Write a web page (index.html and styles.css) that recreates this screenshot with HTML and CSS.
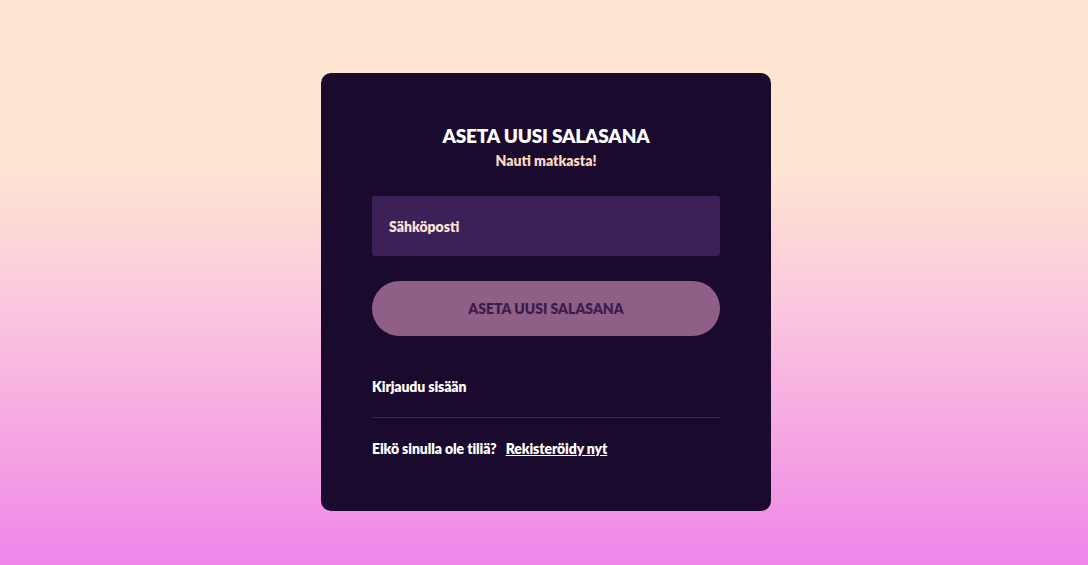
FILE: index.html
```html
<!DOCTYPE html>
<html lang="fi">
<head>
<meta charset="utf-8">
<link rel="stylesheet" href="styles.css">
</head>
<body>
<main class="page">
  <section class="card">
    <header class="head">
      <h1 class="title">ASETA UUSI SALASANA</h1>
      <p class="subtitle">Nauti matkasta!</p>
    </header>
    <div class="field">Sähköposti</div>
    <button class="btn">ASETA UUSI SALASANA</button>
    <a class="login">Kirjaudu sisään</a>
    <hr class="divider">
    <p class="register">Eikö sinulla ole tiliä? <a class="reglink">Rekisteröidy nyt</a></p>
  </section>
</main>
</body>
</html>
```
FILE: styles.css
```css
html, body { margin: 0; height: 100%; }
body {
  font-family: Lato, "Liberation Sans", sans-serif;
  background: linear-gradient(180deg, #fee6d2 0%, #fee4d2 30%, #fbc6df 55%, #f5a5e2 78%, #f086ea 100%);
}
.page {
  height: 565px;
  display: flex;
  justify-content: center;
  align-items: flex-start;
  padding: 73px 0 0 4px;
  box-sizing: border-box;
}
.card {
  width: 450px;
  height: 438px;
  box-sizing: border-box;
  background: #1a0a2e;
  border-radius: 10px;
  padding: 50px 51px 0;
  display: flex;
  flex-direction: column;
}
.head { text-align: center; margin-bottom: 24px; }
.title {
  margin: 0;
  font-size: 19px;
  font-weight: 800;
  color: #ffffff;
  line-height: 26px;
  letter-spacing: -0.2px;
}
.subtitle {
  margin: 1px 0 0;
  font-size: 14px;
  font-weight: 800;
  color: #fcd8c4;
  line-height: 22px;
}
.field {
  height: 60px;
  background: #3c2058;
  border-radius: 3px;
  display: flex;
  align-items: center;
  padding-left: 17px;
  font-size: 14px;
  font-weight: 800;
  color: #fde2d2;
}
.btn {
  margin-top: 25px;
  height: 55px;
  border: none;
  border-radius: 28px;
  background: #8f5f87;
  color: #3e1a4f;
  font-family: inherit;
  font-size: 14px;
  font-weight: 800;
}
.login {
  margin-top: 43px;
  font-size: 14px;
  font-weight: 800;
  color: #ffffff;
  line-height: 16px;
  letter-spacing: -0.1px;
}
.divider {
  width: 100%;
  margin: 22px 0 0;
  border: none;
  border-top: 1px solid #3a2550;
}
.register {
  margin: 23px 0 0;
  font-size: 14px;
  font-weight: 800;
  color: #ffffff;
  line-height: 16px;
  letter-spacing: -0.1px;
}
.reglink { text-decoration: underline; margin-left: 6px; }
```
